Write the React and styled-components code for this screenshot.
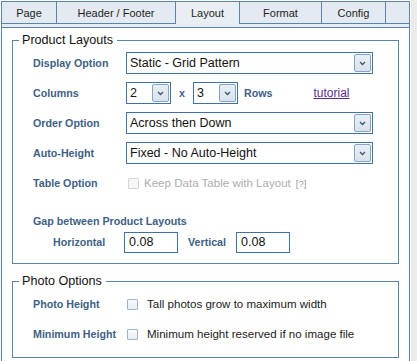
import React from "react";
import styled, { createGlobalStyle } from "styled-components";

const GlobalStyle = createGlobalStyle`
  html, body {
    margin: 0;
    padding: 0;
    background: #fff;
    font-family: "Liberation Sans", Arial, sans-serif;
  }
`;

const tabs = [
  { label: "Page", width: 55 },
  { label: "Header / Footer", width: 119 },
  { label: "Layout", width: 64, active: true },
  { label: "Format", width: 82 },
  { label: "Config", width: 64 },
];

export default function App() {
  return (
    <>
      <GlobalStyle />
      <Page>
        <Frame>
          <TabBar>
            {tabs.map((t) => (
              <Tab key={t.label} $width={t.width} $active={t.active}>
                {t.label}
              </Tab>
            ))}
          </TabBar>
          <TabStrip />
          <Content>
            <Group>
              <Legend>Product Layouts</Legend>
              <Row>
                <Label>Display Option</Label>
                <Select value="Static - Grid Pattern" />
              </Row>
              <Row>
                <Label>Columns</Label>
                <Select value="2" $small />
                <Times>x</Times>
                <Select value="3" $small />
                <InlineLabel>Rows</InlineLabel>
                <Tutorial href="#">tutorial</Tutorial>
              </Row>
              <Row>
                <Label>Order Option</Label>
                <Select value="Across then Down" />
              </Row>
              <Row>
                <Label>Auto-Height</Label>
                <Select value="Fixed - No Auto-Height" />
              </Row>
              <Row>
                <Label>Table Option</Label>
                <Check $disabled $offset={2} />
                <CheckText $disabled $gap={5}>Keep Data Table with Layout</CheckText>
                <Help>[?]</Help>
              </Row>
              <SubHeading>Gap between Product Layouts</SubHeading>
              <GapRow>
                <GapLabel>Horizontal</GapLabel>
                <TextInput>0.08</TextInput>
                <VerticalLabel>Vertical</VerticalLabel>
                <TextInput>0.08</TextInput>
              </GapRow>
            </Group>
            <Group>
              <Legend>Photo Options</Legend>
              <Row>
                <Label>Photo Height</Label>
                <Check $offset={1} />
                <CheckText $gap={9}>Tall photos grow to maximum width</CheckText>
              </Row>
              <Row>
                <Label>Minimum Height</Label>
                <Check $offset={1} />
                <CheckText $gap={9}>Minimum height reserved if no image file</CheckText>
              </Row>
            </Group>
          </Content>
        </Frame>
        <Gutter />
      </Page>
    </>
  );
}

function Select({ value, $small }) {
  return (
    <SelectBox $small={$small}>
      <SelectValue>{value}</SelectValue>
      <ArrowButton>
        <svg width="7" height="5" viewBox="0 0 7 5">
          <path d="M1 1 L3.5 3.5 L6 1" fill="none" stroke="#3d5570" strokeWidth="1.3" />
        </svg>
      </ArrowButton>
    </SelectBox>
  );
}

const Page = styled.div`
  display: flex;
  width: 417px;
  height: 361px;
  padding: 1px 0 0 1px;
  box-sizing: border-box;
  overflow: hidden;
`;

const Frame = styled.div`
  width: 409px;
  flex: none;
  border: 1px solid #5a84b0;
  border-bottom: none;
  box-sizing: border-box;
`;

const Gutter = styled.div`
  margin-left: 1px;
  flex: 1;
  background: #ebebeb;
  margin-top: -1px;
`;

const TabBar = styled.div`
  display: flex;
  height: 21px;
  background: #e4eaf1;
  border-bottom: 1px solid #5a84b0;
`;

const Tab = styled.div`
  width: ${(p) => p.$width}px;
  flex: none;
  box-sizing: border-box;
  border-right: 1px solid #5a84b0;
  display: flex;
  align-items: center;
  justify-content: center;
  font-size: 11px;
  color: #1e1e1e;
  background: ${(p) => (p.$active ? "#e9eef4" : "#e4eaf1")};
  height: ${(p) => (p.$active ? "22px" : "21px")};
  margin-bottom: ${(p) => (p.$active ? "-1px" : "0")};
  position: relative;
`;

const TabStrip = styled.div`
  height: 3px;
  background: #e6ecf2;
  border-bottom: 1px solid #5a84b0;
`;

const Content = styled.div`
  padding: 4px 10px 0 10px;
  display: flex;
  flex-direction: column;
  gap: 9px;
`;

const Group = styled.fieldset`
  margin: 0;
  border: 1px solid #5a84b0;
  padding: 0 10px 8px 20px;
  min-width: 0;
`;

const Legend = styled.legend`
  margin-left: -14px;
  padding: 0 4px 0 3px;
  font-size: 12.6px;
  line-height: 16px;
  color: #111;
`;

const Row = styled.div`
  display: flex;
  align-items: center;
  height: 30px;
`;

const Label = styled.div`
  width: 93px;
  flex: none;
  font-size: 10.7px;
  font-weight: bold;
  color: #3e5f86;
  white-space: nowrap;
`;

const InlineLabel = styled.span`
  font-size: 10.7px;
  font-weight: bold;
  color: #3e5f86;
  margin-left: 6px;
`;

const Times = styled(InlineLabel)`
  margin: 0 8px;
`;

const Tutorial = styled.a`
  margin-left: 41px;
  font-size: 12px;
  color: #5b2a8c;
  text-decoration: underline;
`;

const SelectBox = styled.div`
  width: ${(p) => (p.$small ? "45px" : "247px")};
  height: 22px;
  box-sizing: border-box;
  border: 1px solid #3f72a8;
  background: #fff;
  display: flex;
  align-items: center;
  padding: 0 1px 0 3px;
`;

const SelectValue = styled.span`
  flex: 1;
  font-size: 12.5px;
  color: #111;
  white-space: nowrap;
  overflow: hidden;
`;

const ArrowButton = styled.span`
  width: 17px;
  height: 18px;
  box-sizing: border-box;
  border: 1px solid #88a3c3;
  border-radius: 2px;
  background: linear-gradient(#e8eef5, #d9e2ec);
  display: flex;
  align-items: center;
  justify-content: center;
`;

const Check = styled.span`
  width: 11px;
  height: 11px;
  box-sizing: border-box;
  margin-left: ${(p) => p.$offset}px;
  border: 1px solid ${(p) => (p.$disabled ? "#d4d4d4" : "#9fb2c8")};
  background: ${(p) => (p.$disabled ? "#f6f6f6" : "linear-gradient(#f8f9fb, #e8edf2)")};
  border-radius: 1px;
`;

const CheckText = styled.span`
  margin-left: ${(p) => p.$gap}px;
  font-size: 11.55px;
  color: ${(p) => (p.$disabled ? "#adadad" : "#1a1a1a")};
  white-space: nowrap;
`;

const Help = styled.span`
  margin-left: 5px;
  font-size: 9.5px;
  color: #9a9a9a;
`;

const SubHeading = styled.div`
  margin-top: 15px;
  height: 16px;
  line-height: 16px;
  font-size: 10.7px;
  font-weight: bold;
  color: #3e5f86;
`;

const GapRow = styled.div`
  display: flex;
  align-items: center;
  height: 26px;
`;

const GapLabel = styled.span`
  margin-left: 20px;
  width: 71px;
  font-size: 10.7px;
  font-weight: bold;
  color: #3e5f86;
`;

const VerticalLabel = styled.span`
  margin: 0 10px 0 10px;
  font-size: 10.7px;
  font-weight: bold;
  color: #3e5f86;
`;

const TextInput = styled.div`
  width: 54px;
  height: 21px;
  box-sizing: border-box;
  border: 1px solid #3f72a8;
  padding-left: 4px;
  display: flex;
  align-items: center;
  font-size: 12.5px;
  color: #111;
`;
